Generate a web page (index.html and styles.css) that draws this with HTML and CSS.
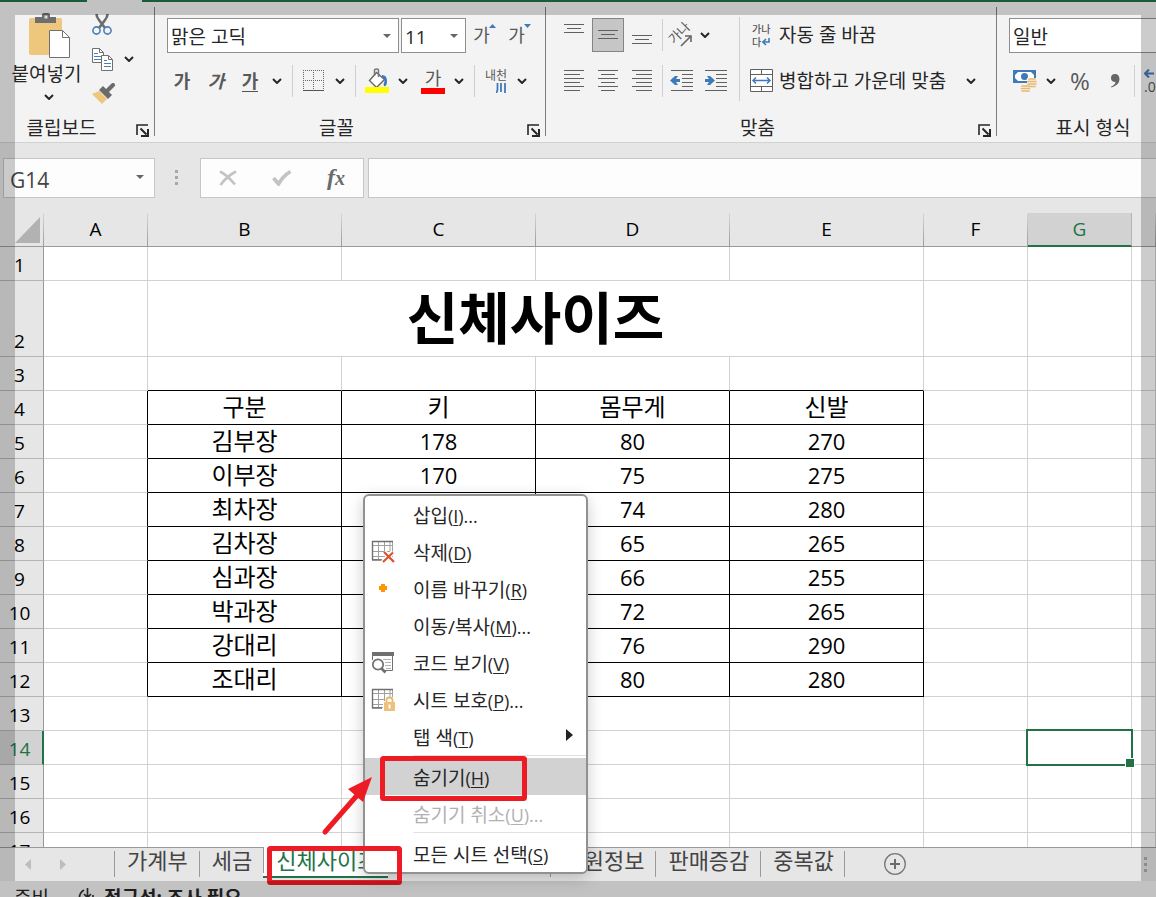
FILE: index.html
```html
<!DOCTYPE html>
<html lang="ko">
<head>
<meta charset="utf-8">
<title>신체사이즈</title>
<link rel="stylesheet" href="styles.css">
</head>
<body>
<svg class="defs" aria-hidden="true">
  <symbol id="chev" viewBox="0 0 10 6"><path d="M1 1l4 4 4-4" fill="none" stroke="#262626" stroke-width="2"/></symbol>
  <symbol id="tri" viewBox="0 0 8 4"><path d="M0 0h8L4 4z" fill="#666"/></symbol>
  <symbol id="launch" viewBox="0 0 13 13"><path d="M1 11V1h11" fill="none" stroke="#262626" stroke-width="1.6"/><path d="M4.500 4.500l6 6M12 5v7H5" fill="none" stroke="#262626" stroke-width="2"/></symbol>
  <symbol id="sheet" viewBox="0 0 24 24"><path d="M1.500 1.500h20v18h-20zM7.500 1.500v18M13.500 1.500v18M19 1.500v18M1.500 5.500h20M1.500 11.500h20M1.500 16.500h20" fill="none" stroke="#a0a0a0"/><path d="M1 1.500h21M1.500 1v19M1 20h10" fill="none" stroke="#707070" stroke-width="1.400"/></symbol>
</svg>

<div class="topline"><span class="topline-tab"></span></div>

<header class="ribbon">
  <section class="group clipboard">
    <div class="clip-body">
      <button class="paste">
        <svg width="42" height="46" viewBox="0 0 42 46"><rect y="5" width="33" height="37" rx="2" fill="#eec67c"/><path d="M6 10V4h7V1.500Q13 0 15 0h4q2 0 2 1.500V4h6v6z" fill="#6e6e6e"/><rect x="15.500" y="2.500" width="3" height="3" fill="#ddd"/><path d="M20.500 17.500h13l7 7v20h-20z" fill="#fff" stroke="#707070"/><path d="M33.500 17.500v7h7" fill="none" stroke="#707070"/></svg>
        <span>붙여넣기</span>
        <svg class="chev"><use href="#chev"/></svg>
      </button>
      <div class="clip-tools">
        <button aria-label="잘라내기"><svg width="20" height="22" viewBox="0 0 20 22"><path d="M4.500 1q0 3 2.500 6l6 8M15.500 1q0 3-2.500 6l-6 8" fill="none" stroke="#6b6b6b" stroke-width="2.600"/><circle cx="4.500" cy="17.500" r="3.600" fill="none" stroke="#4a7fb8" stroke-width="1.600"/><circle cx="15.500" cy="17.500" r="3.600" fill="none" stroke="#4a7fb8" stroke-width="1.600"/></svg></button>
        <div class="split"><button aria-label="복사"><svg width="21" height="23" viewBox="0 0 21 23"><path d="M.5.5h7l4 4v10H.5z" fill="#fff" stroke="#707070"/><path d="M7.500.5v4h4" fill="none" stroke="#707070"/><path d="M2 5.500h4M2 8.500h7M2 11.500h7" stroke="#4a7fb8"/><path d="M9.500 7.500h7l4 4v11h-11z" fill="#fff" stroke="#707070"/><path d="M16.500 7.500v4h4" fill="none" stroke="#707070"/><path d="M12 12.500h3M12 15.500h7M12 18.500h7" stroke="#4a7fb8"/></svg></button><button class="drop" aria-label="복사 옵션"><svg class="chev"><use href="#chev"/></svg></button></div>
        <button aria-label="서식 복사"><svg width="24" height="22" viewBox="0 0 24 22"><path d="M0 11l7-3 8 8-5 5z" fill="#eec67c"/><path d="M7 7l4-4 9 9-4 4z" fill="#6b6b6b"/><path d="M15 8l6-6" stroke="#6b6b6b" stroke-width="4" stroke-linecap="round"/></svg></button>
      </div>
    </div>
    <div class="group-label"><span>클립보드</span><button class="launch" aria-label="클립보드 설정"><svg><use href="#launch"/></svg></button></div>
  </section>

  <section class="group font">
    <div class="row boxes">
      <label class="combo wide"><select aria-label="글꼴 이름"><option>맑은 고딕</option></select><svg><use href="#tri"/></svg></label>
      <label class="combo small"><select aria-label="글꼴 크기"><option>11</option></select><svg><use href="#tri"/></svg></label>
      <button class="tool size">가<svg width="7" height="4"><path d="M0 4h7L3.500 0z" fill="#3f7ab8"/></svg></button>
      <button class="tool size">가<svg width="7" height="4"><path d="M0 0h7L3.500 4z" fill="#3f7ab8"/></svg></button>
    </div>
    <div class="row">
      <button class="tool glyph bold">가</button>
      <button class="tool glyph bold italic">가</button>
      <button class="tool glyph bold"><u>가</u></button>
      <button class="drop" aria-label="밑줄 옵션"><svg class="chev"><use href="#chev"/></svg></button>
      <span class="vsep"></span>
      <button class="tool narrow" aria-label="테두리"><svg width="22" height="22" viewBox="0 0 22 22"><path d="M.5 0v20M10.500 0v20M20.500 0v20M0 .5h21M0 10.500h21" stroke="#666" stroke-dasharray="1 1"/><path d="M0 20.500h21" stroke="#555"/></svg></button>
      <button class="drop" aria-label="테두리 옵션"><svg class="chev"><use href="#chev"/></svg></button>
      <span class="vsep"></span>
      <button class="tool narrow" aria-label="채우기 색"><svg width="24" height="26" viewBox="0 0 24 26"><path d="M11.500 4.500l8 7-8 8-7-7z" fill="#fff" stroke="#666" stroke-width="1.400"/><path d="M9.500 8V2.500Q9.500 1 11.500 1t2 1.500V9" fill="none" stroke="#777" stroke-width="1.500"/><path d="M17 7q5 0 5 6t-3 5q-1-2 .5-4.500 0-3-3-4z" fill="#3f7ab8"/><path d="M0 19h24v6H0z" fill="#ff0"/></svg></button>
      <button class="drop" aria-label="채우기 색 옵션"><svg class="chev"><use href="#chev"/></svg></button>
      <button class="tool narrow ink">가<span class="swatch"></span></button>
      <button class="drop" aria-label="글꼴 색 옵션"><svg class="chev"><use href="#chev"/></svg></button>
      <span class="vsep"></span>
      <button class="tool narrow ruby" aria-label="윗주"><span>내천</span><svg width="10" height="10" viewBox="0 0 10 10"><path d="M1.500 0v6q0 2.500-1.500 4M5 0v9M9 0v10" fill="none" stroke="#3f7ab8" stroke-width="1.800"/></svg></button>
      <button class="drop" aria-label="윗주 옵션"><svg class="chev"><use href="#chev"/></svg></button>
    </div>
    <div class="group-label"><span>글꼴</span><button class="launch" aria-label="글꼴 설정"><svg><use href="#launch"/></svg></button></div>
  </section>

  <section class="group align">
    <div class="align-body">
      <div class="align-left">
        <div class="row">
          <button class="tool" aria-label="위쪽 맞춤"><svg width="20" height="22"><path d="M0 .5h20M3 4.500h14M0 8.500h20" stroke="#606060"/></svg></button>
          <button class="tool on" aria-label="가운데 맞춤"><svg width="20" height="10"><path d="M0 .5h20M3 4.500h14M0 8.500h20" stroke="#606060"/></svg></button>
          <button class="tool" aria-label="아래쪽 맞춤"><svg width="20" height="22"><path d="M0 11.500h20M3 15.500h14M0 19.500h20" stroke="#606060"/></svg></button>
          <span class="vsep tight"></span>
          <button class="tool" aria-label="방향"><svg class="tilt" width="24" height="24" viewBox="0 0 24 24"><text x="2" y="21" transform="rotate(-45 4 19)" class="orient">가나</text><path d="M11 23L21 13M15 13h6v6" fill="none" stroke="#666" stroke-width="1.600"/></svg></button>
          <button class="drop slim" aria-label="방향 옵션"><svg class="chev"><use href="#chev"/></svg></button>
        </div>
        <div class="row">
          <button class="tool" aria-label="왼쪽 맞춤"><svg width="20" height="22"><path d="M0 .5h20M0 4.500h16M0 8.500h20M0 12.500h16M0 16.500h20M0 20.500h16" stroke="#606060"/></svg></button>
          <button class="tool" aria-label="중앙 맞춤"><svg width="20" height="22"><path d="M0 .5h20M3 4.500h14M0 8.500h20M3 12.500h14M0 16.500h20M3 20.500h14" stroke="#606060"/></svg></button>
          <button class="tool" aria-label="오른쪽 맞춤"><svg width="20" height="22"><path d="M0 .5h20M4 4.500h16M0 8.500h20M4 12.500h16M0 16.500h20M4 20.500h16" stroke="#606060"/></svg></button>
          <span class="vsep tight"></span>
          <button class="tool" aria-label="내어쓰기"><svg width="24" height="22"><path d="M1 .5h22M12 4.500h11M12 8.500h11M12 12.500h11M12 16.500h11M1 20.500h22" stroke="#606060"/><path d="M0 10.500L5 6h3L6 9h4v3H6l2 3H5z" fill="#3f7ab8"/></svg></button>
          <button class="tool" aria-label="들여쓰기"><svg width="24" height="22"><path d="M1 .5h22M12 4.500h11M12 8.500h11M12 12.500h11M12 16.500h11M1 20.500h22" stroke="#606060"/><path d="M11 10.500L6 6H3l2 3H1v3h4l-2 3h3z" fill="#3f7ab8"/></svg></button>
        </div>
      </div>
      <div class="align-right">
        <button class="wrap"><span class="wrap-icon"><i>가나</i><i>다<svg width="8" height="8" viewBox="0 0 8 8"><path d="M7 0v4H2M4 1L1 4l3 3" fill="none" stroke="#3f7ab8" stroke-width="1.600"/></svg></i></span>자동 줄 바꿈</button>
        <button class="wrap"><span class="wrap-icon"><svg width="24" height="24" viewBox="0 0 24 24"><path d="M.5.5h22v22H.5zM.5 5.500h22M.5 17.500h22M11.500.5v5M11.500 17.500v5" fill="#fff" stroke="#606060"/><path d="M3 11.500h17M6 8.500l-3 3 3 3M17 8.500l3 3-3 3" fill="none" stroke="#3f7ab8" stroke-width="1.500"/></svg></span>병합하고 가운데 맞춤<svg class="chev"><use href="#chev"/></svg></button>
      </div>
    </div>
    <div class="group-label"><span>맞춤</span><button class="launch" aria-label="맞춤 설정"><svg><use href="#launch"/></svg></button></div>
  </section>

  <section class="group number">
    <div class="row boxes"><label class="combo fmt"><select aria-label="표시 형식"><option>일반</option></select></label></div>
    <div class="row money">
      <button class="tool narrow" aria-label="회계 표시 형식"><svg width="24" height="24" viewBox="0 0 24 24"><path d="M0 1h23v13H0z" fill="#3f7ab8"/><path d="M5 3h13l3 3v3l-3 3H5L2 9V6z" fill="#fff"/><circle cx="11.500" cy="7.500" r="3.500" fill="#3f7ab8"/><path d="M14 9h9v9h-5v5H8v-7h6z" fill="#f3f3f3"/><path d="M16 10h6M15 12.500h8M15 15h8M17 17.500h5M9 17h7M8.500 19.500h8M9 22h7" stroke="#e8b96a" stroke-width="1.700" stroke-linecap="round"/></svg></button>
      <button class="drop" aria-label="회계 옵션"><svg class="chev"><use href="#chev"/></svg></button>
      <button class="tool pct">%</button>
      <button class="tool" aria-label="쉼표 스타일"><svg width="10" height="16" viewBox="0 0 10 16"><path d="M5 1q4 0 4.500 5 0 6-8 8.500l-.5-1Q5 12 5.500 9 1 9 1 5t4-4z" fill="#666"/></svg></button>
      <span class="vsep last"></span>
      <button class="tool dec"><svg width="10" height="9" viewBox="0 0 10 9"><path d="M1 4.500h9M5 .5l-4 4 4 4" fill="none" stroke="#3f7ab8" stroke-width="2"/></svg><span>.00</span></button>
    </div>
    <div class="group-label"><span>표시 형식</span></div>
  </section>
</header>

<div class="formula">
  <label class="namebox"><input aria-label="이름 상자" value="G14"><svg><use href="#tri"/></svg></label>
  <span class="grip"><i></i><i></i><i></i></span>
  <div class="fx">
    <button aria-label="취소"><svg width="18" height="16" viewBox="0 0 18 16"><path d="M1 1.500Q8 5 16 14.500M17 1.500Q8 6 1.500 15" fill="none" stroke="#c3c3c3" stroke-width="2.600"/></svg></button>
    <button aria-label="입력"><svg width="20" height="16" viewBox="0 0 20 16"><path d="M1.500 8l5 6Q11 6 18.500 1.500" fill="none" stroke="#c3c3c3" stroke-width="3.600"/></svg></button>
    <button class="fn">f<small>x</small></button>
  </div>
  <input class="entry" aria-label="수식 입력줄">
</div>

<main class="sheet">
  <table>
    <colgroup><col class="c-head"><col class="c-s"><col class="c-w"><col class="c-w"><col class="c-w"><col class="c-w"><col class="c-s"><col class="c-s"><col></colgroup>
    <thead><tr><th class="corner"><svg width="26" height="26"><path d="M25 0v26H0z" fill="#b2b2b2"/></svg></th><th>A</th><th>B</th><th>C</th><th>D</th><th>E</th><th>F</th><th class="sel">G</th><th></th></tr></thead>
    <tbody>
      <tr><th>1</th><td></td><td></td><td></td><td></td><td></td><td></td><td></td><td></td></tr>
      <tr class="tall"><th>2</th><td></td><td class="title" colspan="4">신체사이즈</td><td></td><td></td><td></td></tr>
      <tr class="above"><th>3</th><td></td><td></td><td></td><td></td><td></td><td></td><td></td><td></td></tr>
      <tr class="data head"><th>4</th><td></td><td>구분</td><td>키</td><td>몸무게</td><td>신발</td><td></td><td></td><td></td></tr>
      <tr class="data"><th>5</th><td></td><td>김부장</td><td>178</td><td>80</td><td>270</td><td></td><td></td><td></td></tr>
      <tr class="data"><th>6</th><td></td><td>이부장</td><td>170</td><td>75</td><td>275</td><td></td><td></td><td></td></tr>
      <tr class="data"><th>7</th><td></td><td>최차장</td><td></td><td>74</td><td>280</td><td></td><td></td><td></td></tr>
      <tr class="data"><th>8</th><td></td><td>김차장</td><td></td><td>65</td><td>265</td><td></td><td></td><td></td></tr>
      <tr class="data"><th>9</th><td></td><td>심과장</td><td></td><td>66</td><td>255</td><td></td><td></td><td></td></tr>
      <tr class="data"><th>10</th><td></td><td>박과장</td><td></td><td>72</td><td>265</td><td></td><td></td><td></td></tr>
      <tr class="data"><th>11</th><td></td><td>강대리</td><td></td><td>76</td><td>290</td><td></td><td></td><td></td></tr>
      <tr class="data"><th>12</th><td></td><td>조대리</td><td></td><td>80</td><td>280</td><td></td><td></td><td></td></tr>
      <tr><th>13</th><td></td><td></td><td></td><td></td><td></td><td></td><td></td><td></td></tr>
      <tr><th class="sel">14</th><td></td><td></td><td></td><td></td><td></td><td></td><td class="active"><span class="cursor"></span></td><td></td></tr>
      <tr><th>15</th><td></td><td></td><td></td><td></td><td></td><td></td><td></td><td></td></tr>
      <tr><th>16</th><td></td><td></td><td></td><td></td><td></td><td></td><td></td><td></td></tr>
      <tr><th>17</th><td></td><td></td><td></td><td></td><td></td><td></td><td></td><td></td></tr>
    </tbody>
  </table>
</main>

<nav class="tabs">
  <div class="tab-nav">
    <button aria-label="이전 시트"><svg width="6" height="11"><path d="M6 0v11L0 5.500z" fill="#bdbdbd"/></svg></button>
    <button aria-label="다음 시트"><svg width="6" height="11"><path d="M0 0v11l6-5.500z" fill="#bdbdbd"/></svg></button>
  </div>
  <button class="tab">가계부</button>
  <button class="tab">세금</button>
  <button class="tab current">신체사이즈</button>
  <span class="tab-space"></span>
  <button class="tab">사원정보</button>
  <button class="tab">판매증감</button>
  <button class="tab final">중복값</button>
  <button class="add" aria-label="새 시트"><svg width="24" height="24" viewBox="0 0 24 24"><circle cx="12" cy="12" r="10.300" fill="none" stroke="#777" stroke-width="1.300"/><path d="M12 7v10M7 12h10" stroke="#6b6b6b" stroke-width="2"/></svg></button>
  <span class="grip end"><i></i><i></i><i></i></span>
</nav>

<footer class="status">
  <span class="ready">준비</span>
  <svg width="20" height="20" viewBox="0 0 20 20"><path d="M6 2Q1 5 1.500 11t6 8M9.500 0v10M6 6l3.500 3.500L13 6M13 10h6M15 7v6" fill="none" stroke="#333" stroke-width="1.700"/></svg>
  <b>접근성: 조사 필요</b>
</footer>

<div class="menu" role="menu">
  <button role="menuitem"><span class="mi"></span>삽입<small>(<u>I</u>)...</small></button>
  <button role="menuitem"><span class="mi"><svg width="24" height="24" viewBox="0 0 24 24"><use href="#sheet"/><path d="M13 12l10 10M22 12L12 22" stroke="#fff" stroke-width="5"/><path d="M13 12l10 10M22 12.500L12 22" stroke="#d9532c" stroke-width="2.200"/></svg></span>삭제<small>(<u>D</u>)</small></button>
  <button role="menuitem"><span class="mi"><svg width="24" height="24" viewBox="0 0 24 24"><path d="M10 7h4v2h2v4h-2v2h-4v-2H8V9h2z" fill="#ff9500"/></svg></span>이름 바꾸기<small>(<u>R</u>)</small></button>
  <button role="menuitem"><span class="mi"></span>이동/복사<small>(<u>M</u>)...</small></button>
  <button role="menuitem"><span class="mi"><svg width="24" height="24" viewBox="0 0 24 24"><path d="M1.500 2v7M21.500 2v17.500H14" fill="none" stroke="#707070"/><path d="M1 1h22v4H1z" fill="#707070"/><path d="M12 8.500h8M14 11.500h6M14 14.500h6M15 17.500h5" stroke="#b0b0b0"/><circle cx="7" cy="13.500" r="5.200" fill="#fff" stroke="#707070" stroke-width="1.700"/><path d="M10.500 17.500l4 4" stroke="#707070" stroke-width="2.600"/></svg></span>코드 보기<small>(<u>V</u>)</small></button>
  <button role="menuitem"><span class="mi"><svg width="25" height="24" viewBox="0 0 25 24"><use href="#sheet" width="24" height="24"/><path d="M12 13h2V9h9v4h2v11H12z" fill="#fff"/><path d="M15.500 14v-2q0-2.500 3-2.500t3 2.500v2" fill="none" stroke="#e8b96a" stroke-width="1.800"/><path d="M13 14h11v9H13z" fill="#eec07a"/><path d="M18.500 16.500v4" stroke="#fff" stroke-width="2"/></svg></span>시트 보호<small>(<u>P</u>)...</small></button>
  <button role="menuitem"><span class="mi"></span>탭 색<small>(<u>T</u>)</small><svg class="sub" width="7" height="12"><path d="M0 0v12l7-6z" fill="#222"/></svg></button>
  <hr>
  <button role="menuitem" class="hover"><span class="mi"></span>숨기기<small>(<u>H</u>)</small></button>
  <button role="menuitem" disabled><span class="mi"></span>숨기기 취소<small>(<u>U</u>)...</small></button>
  <hr>
  <button role="menuitem"><span class="mi"></span>모든 시트 선택<small>(<u>S</u>)</small></button>
</div>

<svg class="marks" aria-hidden="true">
  <g fill="none" stroke="#ed1c24" stroke-width="5"><rect x="382.500" y="758.500" width="142" height="40" rx="1"/><rect x="269.500" y="848.500" width="130" height="34" rx="1"/><path d="M325 832L360 792" stroke-linecap="round"/></g>
  <path d="M372 777L348 789 363 802z" fill="#ed1c24"/>
</svg>
<div class="frame"></div>
</body>
</html>
```

FILE: styles.css
```css
* { box-sizing: border-box; }
body {
  margin: 0;
  height: 100vh;
  display: flex;
  flex-direction: column;
  overflow: hidden;
  position: relative;
  background: #e6e6e6;
  color: #262626;
  font: 19px/24px "Open Sans", "Noto Sans CJK KR", sans-serif;
}
button, input, select {
  font: inherit;
  color: inherit;
  background: none;
  border: 0;
  border-radius: 0;
  margin: 0;
  padding: 0;
}
button { white-space: nowrap; }
svg { display: block; flex: none; }
.defs { position: absolute; width: 0; height: 0; }

.topline { flex: none; height: 2px; background: #217346; display: flex; padding-left: 87px; }
.topline-tab { width: 55px; background: #f3f3f3; }

/* Ribbon */
.ribbon {
  flex: none;
  display: flex;
  height: 141px;
  padding-top: 5px;
  background: #f3f3f3;
  border-bottom: 1px solid #d2d2d2;
  overflow: hidden;
}
.group { position: relative; flex: none; display: flex; flex-direction: column; height: 133px; }
.group:not(.number)::after {
  content: "";
  position: absolute;
  right: 0; top: 0;
  width: 1px; height: 129px;
  background: #7d7d7d;
}
.clipboard { width: 155px; }
.font { width: 391px; }
.align { width: 451px; }
.number { width: 195px; }
.group-label {
  display: flex;
  align-items: center;
  justify-content: center;
  height: 24px;
  margin-top: auto;
  position: relative;
  padding-right: 28px;
}
.clipboard .group-label { padding-right: 32px; }
.number .group-label { padding-right: 3px; }
.launch { position: absolute; right: 6px; top: 8px; }
.launch svg { width: 13px; height: 13px; }
.chev { width: 10px; height: 6px; }
.drop { width: 20px; height: 36px; display: flex; align-items: center; justify-content: center; }
.drop.slim { width: 10px; }

.clip-body { display: flex; height: 104px; }
.paste { width: 100px; padding-top: 6px; display: flex; flex-direction: column; align-items: center; }
.paste span { padding-top: 2px; line-height: 26px; margin: 0 7px 4px 0; }
.paste .chev { margin: 3px 2px 0 0; }
.clip-tools { display: flex; flex-direction: column; margin-left: -8px; }
.clip-tools button { height: 35px; display: flex; align-items: center; }
.split { display: flex; gap: 6px; }

.font, .number { padding-top: 10px; }
.row { display: flex; align-items: center; height: 36px; padding-left: 10px; }
.row + .row { margin-top: 10px; }
.row.boxes { padding-left: 12px; }
.combo { position: relative; display: block; height: 35px; background: #fff; border: 1px solid #8f8f8f; }
.combo select { appearance: none; width: 100%; height: 33px; padding: 3px 0 0 3px; outline: 0; }
.combo svg { position: absolute; width: 8px; height: 4px; right: 7px; top: 15px; }
.wide { width: 232px; margin-right: 2px; }
.small { width: 65px; }
.fmt { width: 170px; }
.tool { width: 32px; height: 34px; display: flex; align-items: center; justify-content: center; color: #595959; }
.size { width: 35px; font-size: 18px; padding-right: 4px; position: relative; }
.size svg { position: absolute; right: 5px; top: 6px; }
.glyph { width: 34px; }
.bold { font-weight: 700; font-size: 18px; }
.italic { font-style: italic; }
.bold u { text-decoration: none; border-bottom: 1px solid #555; line-height: 20px; }
.vsep { width: 1px; height: 32px; background: #cfcfcf; margin: 0 5px; }
.vsep.tight { margin: 0 1px 0 2px; }
.vsep.last { margin-left: 3px; }
.ink { flex-direction: column; margin-left: 4px; line-height: 19px; font-size: 18px; justify-content: flex-start; padding-top: 5px; }
.swatch { width: 24px; height: 6px; background: #f00; }
.ruby { flex-direction: column; font-size: 12px; line-height: 14px; }
.ruby svg { align-self: flex-end; margin-right: 6px; }

.align-body { display: flex; padding-top: 10px; }
.align-left { width: 194px; border-right: 1px solid #cfcfcf; height: 84px; }
.align-left .row { padding-left: 12px; gap: 2px; }
.on { background: #c6c6c6; border: 1px solid #848484; }
.tilt { overflow: visible; }
.orient { font-size: 13px; fill: #595959; }
.align-right { padding-left: 5px; }
.wrap { display: flex; align-items: center; height: 36px; }
.wrap + .wrap { margin-top: 10px; }
.wrap-icon { width: 34px; display: flex; flex-direction: column; align-items: center; }
.wrap-icon i { width: 20px; font: 500 10px/13px "Noto Sans CJK KR", sans-serif; color: #595959; display: flex; align-items: center; gap: 1px; }
.wrap > .chev { margin-left: 20px; }
.row.money { padding-left: 12px; }
.pct { margin: 0 3px; font-size: 24px; }
.dec { flex-direction: column; align-items: flex-start; font-size: 14px; line-height: 12px; padding-left: 4px; gap: 3px; }

/* Formula bar */
.formula { flex: none; height: 70px; padding: 15px 0 0 3px; display: flex; align-items: flex-start; }
.namebox, .fx, .entry { height: 40px; background: #fdfdfd; border: 1px solid #c6c6c6; }
.namebox { width: 152px; position: relative; }
.namebox input { width: 110px; height: 38px; padding: 3px 0 0 6px; font-size: 21px; color: #444; outline: 0; }
.namebox svg { position: absolute; right: 10px; top: 16px; width: 8px; height: 4px; }
.grip { width: 45px; height: 40px; display: flex; flex-direction: column; align-items: center; justify-content: center; gap: 3px; padding: 0 2px 1px 0; }
.grip i { width: 3px; height: 3px; background: #a8a8a8; }
.fx { width: 164px; display: flex; }
.fx button { flex: 1; display: flex; align-items: center; justify-content: center; }
.fx .fn { font: italic 700 24px/28px "Liberation Serif", serif; color: #6b6b6b; padding-bottom: 3px; }
.fn small { font-size: 20px; padding-top: 3px; }
.entry { flex: 1; min-width: 0; margin-left: 4px; border-right: 0; padding: 0 8px; }

/* Sheet */
.sheet { flex: 1; min-height: 0; overflow: hidden; background: #fff; }
table { width: 100%; table-layout: fixed; border-collapse: separate; border-spacing: 0; color: #000; }
.c-head { width: 44px; }
.c-s { width: 104px; }
.c-w { width: 194px; }
th, td { padding: 0 0 2px; height: 34px; font-weight: 400; border: 0 solid #d2d2d2; border-width: 0 1px 1px 0; line-height: 28px; text-align: center; }
th { background: #e6e6e6; border-color: #999; }
tbody th { vertical-align: bottom; padding: 0 4px 1px 0; border-bottom-color: #b5b5b5; }
thead th { border-right: 1px solid; border-image: linear-gradient(#d9d9d9, #999) 1; border-bottom-width: 1px; }
thead .corner svg { margin: 2px 0 0 15px; }
thead .sel { background: #d2d2d2; color: #217346; border-image: none; border-color: #b5b5b5; border-bottom: 2px solid #217346; padding-bottom: 1px; }
tbody .sel { background: #d2d2d2; color: #217346; border-right: 2px solid #217346; padding-right: 3px; }
.tall td, .tall th { height: 76px; }
.title { font-size: 56px; line-height: 68px; font-weight: 700; padding-bottom: 4px; }
.data td { font-size: 22px; }
.data.head td, .data td:nth-child(3) { font-size: 24px; }
.data td:nth-child(n+2):nth-child(-n+6) { border-right-color: #000; }
.data td:nth-child(n+3):nth-child(-n+6), .above td:nth-child(n+3):nth-child(-n+6) { border-bottom-color: #000; }
.active { position: relative; }
.cursor { position: absolute; inset: -2px; border: 2px solid #217346; }
.cursor::after { content: ""; position: absolute; right: -4px; bottom: -4px; width: 8px; height: 8px; background: #217346; border: 1px solid #fff; }

/* Sheet tabs */
.tabs { flex: none; height: 34px; display: flex; border-top: 1px solid #999; background: #e6e6e6; }
.tab-nav { width: 114px; padding: 0 0 0 25px; display: flex; align-items: center; gap: 29px; }
.tab { height: 30px; padding: 0 11px 6px 13px; font-size: 22px; line-height: 24px; color: #444; position: relative; }
.tab::before, .final::after { content: ""; position: absolute; left: 0; top: 3px; width: 1px; height: 26px; background: #999; }
.final::after { left: auto; right: 0; }
.current { background: #fff; color: #217346; border-bottom: 2px solid #217346; margin-top: -1px; height: 31px; padding-bottom: 3px; }
.current::before { top: 0; }
.tab-space { width: 162px; }
.add { margin-left: 38px; padding-bottom: 2px; }
.grip.end { margin-left: auto; width: 21px; height: 34px; padding: 0 0 2px; }
.grip.end i { background: #b0b0b0; }

.status { flex: none; height: 16px; overflow: hidden; display: flex; align-items: flex-start; padding-left: 14px; background: #f3f3f3; line-height: 34px; }
.status svg { margin: 7px 6px 0 29px; }

/* Context menu */
.menu {
  position: absolute;
  left: 363px; top: 494px;
  width: 225px;
  background: #fff;
  border: 2px solid #919191;
  border-radius: 6px;
  box-shadow: 0 4px 16px rgba(0, 0, 0, .2);
}
.menu button { width: 100%; height: 37px; display: flex; align-items: center; padding: 2px 13px 0 6px; }
.menu small { font-size: 18px; }
.menu u { text-underline-offset: 2px; text-decoration-thickness: 1px; }
.mi { width: 42px; margin-top: -2px; }
.menu .hover { background: #d2d2d2; }
.menu button:disabled { color: #b1b1b1; }
.menu hr { height: 1px; border: 0; background: #e1e1e1; margin: 0 0 2px 48px; }
.sub { margin-left: auto; margin-top: -5px; }

.marks { position: absolute; inset: 0; width: 100%; height: 100%; pointer-events: none; }
.frame { position: absolute; inset: 0; border: 15px solid rgba(0, 0, 0, .2); border-bottom-width: 16px; pointer-events: none; }
```
